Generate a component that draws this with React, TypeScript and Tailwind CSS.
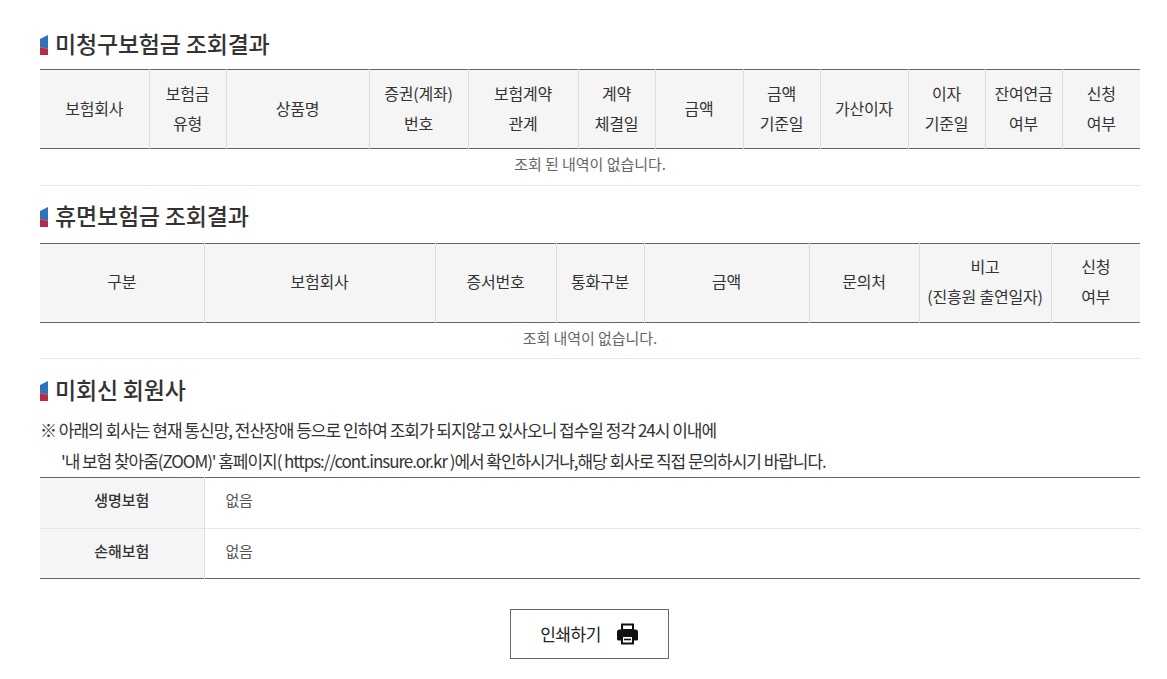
const font = { fontFamily: '"Noto Sans CJK KR", "Noto Sans", sans-serif' };

const firstCols = [109, 77, 143, 99, 110, 77, 88, 77, 88, 77, 77, 78];
const firstHead = [
  ["보험회사"],
  ["보험금", "유형"],
  ["상품명"],
  ["증권(계좌)", "번호"],
  ["보험계약", "관계"],
  ["계약", "체결일"],
  ["금액"],
  ["금액", "기준일"],
  ["가산이자"],
  ["이자", "기준일"],
  ["잔여연금", "여부"],
  ["신청", "여부"],
];

const secondCols = [164, 231, 121, 88, 165, 110, 132, 89];
const secondHead = [
  ["구분"],
  ["보험회사"],
  ["증서번호"],
  ["통화구분"],
  ["금액"],
  ["문의처"],
  ["비고", "(진흥원 출연일자)"],
  ["신청", "여부"],
];

function Title({ text }: { text: string }) {
  return (
    <h2 className="flex items-center gap-[7px] h-[30px] text-[23px] font-medium leading-[28px] tracking-[-0.2px] text-[#333]">
      <svg width="8" height="20" viewBox="0 0 8 20" className="shrink-0 mt-[2px]">
        <path d="M8 0V14L0 12V4Z" fill="#2f72b8" />
        <path d="M0 12L8 14V20H0Z" fill="#bb2a45" />
      </svg>
      <span className="-mt-[3px]">{text}</span>
    </h2>
  );
}

function ResultTable({
  cols,
  head,
  empty,
  headPad,
  rowClass,
}: {
  cols: number[];
  head: string[][];
  empty: string;
  headPad: string;
  rowClass: string;
}) {
  return (
    <table className="w-[1100px] table-fixed border-collapse border-t border-[#666]">
      <colgroup>
        {cols.map((w, i) => (
          <col key={i} style={{ width: w }} />
        ))}
      </colgroup>
      <thead>
        <tr className="h-[79px] bg-[#f5f5f5] border-b border-[#666]">
          {head.map((lines, i) => (
            <th
              key={i}
              className={`border-l border-[#ddd] first:border-l-0 p-0 ${headPad} text-[16px] font-normal leading-[30px] tracking-[-0.2px] text-[#333]`}
            >
              {lines.map((l) => (
                <div key={l}>{l}</div>
              ))}
            </th>
          ))}
        </tr>
      </thead>
      <tbody>
        <tr className={`${rowClass} border-b border-[#e5e5e5]`}>
          <td
            colSpan={cols.length}
            className="p-0 pb-[6px] text-center text-[15px] leading-[26px] tracking-[-0.05px] text-[#666]"
          >
            {empty}
          </td>
        </tr>
      </tbody>
    </table>
  );
}

function PrintIcon() {
  return (
    <svg width="22" height="22" viewBox="0 0 22 22" className="shrink-0">
      <path d="M5 1.5H16V7H5Z" fill="#fff" stroke="#111" strokeWidth="2" />
      <path
        d="M2.5 6.5H18.5Q21 6.5 21 9V16Q21 17.5 19.5 17.5H1.5Q0 17.5 0 16V9Q0 6.5 2.5 6.5Z"
        fill="#111"
      />
      <path d="M5 13H16V20.5H5Z" fill="#fff" stroke="#111" strokeWidth="2" />
      <path d="M7 16.5H14" stroke="#111" strokeWidth="1.6" />
    </svg>
  );
}

export default function App() {
  return (
    <div style={font} className="w-[1167px] h-[679px] overflow-hidden bg-white pl-10 pt-[29px]">
      <Title text="미청구보험금 조회결과" />
      <div className="mt-[10px]">
        <ResultTable
          cols={firstCols}
          head={firstHead}
          empty="조회 된 내역이 없습니다."
          headPad="pb-[3px]"
          rowClass="h-[37px]"
        />
      </div>
      <div className="mt-[15px]">
        <Title text="휴면보험금 조회결과" />
      </div>
      <div className="mt-[12px]">
        <ResultTable
          cols={secondCols}
          head={secondHead}
          empty="조회 내역이 없습니다."
          headPad="pb-[5px]"
          rowClass="h-[36px]"
        />
      </div>
      <div className="mt-[16px]">
        <Title text="미회신 회원사" />
      </div>
      <div className="mt-[9px] mb-[1px] text-[17px] leading-[31px] tracking-[-1px] text-[#333]">
        <p>※ 아래의 회사는 현재 통신망, 전산장애 등으로 인하여 조회가 되지않고 있사오니 접수일 정각 24시 이내에</p>
        <p className="pl-[21px] tracking-[-1.05px]">
          '내 보험 찾아줌(ZOOM)' 홈페이지( https://cont.insure.or.kr )에서 확인하시거나,해당 회사로 직접 문의하시기 바랍니다.
        </p>
      </div>
      <table className="w-[1100px] table-fixed border-collapse border-t border-b border-[#666]">
        <colgroup>
          <col className="w-[164px]" />
          <col />
        </colgroup>
        <tbody>
          {["생명보험", "손해보험"].map((name, i) => (
            <tr key={name} className={i === 0 ? "h-[51px] border-b border-[#e5e5e5]" : "h-[50px]"}>
              <th className="bg-[#f5f5f5] border-r border-[#ddd] p-0 pb-[5px] text-[15px] font-medium tracking-[-0.1px] text-[#333]">
                {name}
              </th>
              <td className="pl-[21px] pb-[5px] text-[15px] tracking-[-0.4px] text-[#555]">없음</td>
            </tr>
          ))}
        </tbody>
      </table>
      <div className="ml-[470px] mt-[30px]">
        <button className="flex items-center justify-center gap-[16px] w-[159px] h-[50px] bg-white border border-[#666] text-[17px] tracking-[-0.5px] text-[#222]">
          <span className="-mt-[1px]">인쇄하기</span>
          <PrintIcon />
        </button>
      </div>
    </div>
  );
}
